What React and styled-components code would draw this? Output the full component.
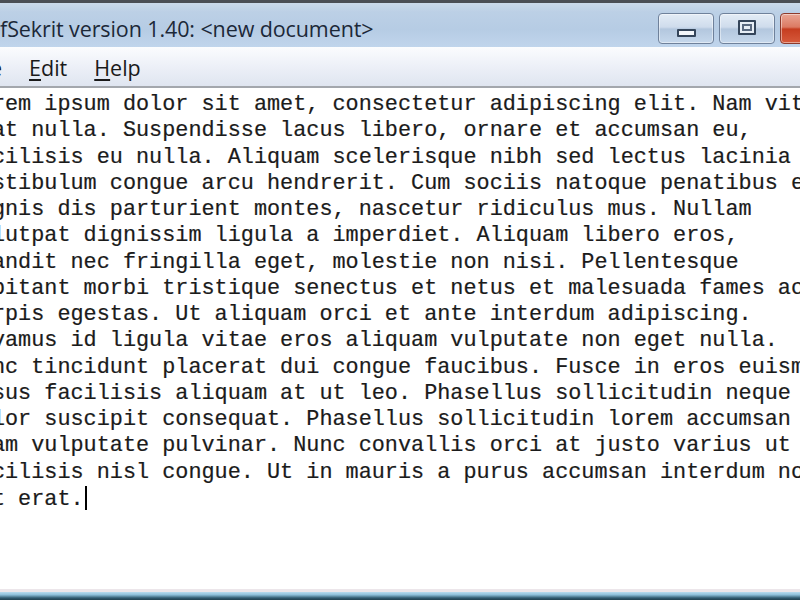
import React from "react";
import styled, { createGlobalStyle } from "styled-components";

const GlobalStyle = createGlobalStyle`
  html, body {
    margin: 0;
    padding: 0;
    background: #fff;
  }
  body {
    overflow: hidden;
  }
`;

const lines = [
  "Lorem ipsum dolor sit amet, consectetur adipiscing elit. Nam vitae",
  "erat nulla. Suspendisse lacus libero, ornare et accumsan eu,",
  "facilisis eu nulla. Aliquam scelerisque nibh sed lectus lacinia",
  "Vestibulum congue arcu hendrerit. Cum sociis natoque penatibus et",
  "magnis dis parturient montes, nascetur ridiculus mus. Nullam",
  "volutpat dignissim ligula a imperdiet. Aliquam libero eros,",
  "blandit nec fringilla eget, molestie non nisi. Pellentesque",
  "habitant morbi tristique senectus et netus et malesuada fames ac",
  "turpis egestas. Ut aliquam orci et ante interdum adipiscing.",
  "Vivamus id ligula vitae eros aliquam vulputate non eget nulla.",
  "Nunc tincidunt placerat dui congue faucibus. Fusce in eros euismod",
  "risus facilisis aliquam at ut leo. Phasellus sollicitudin neque",
  "dolor suscipit consequat. Phasellus sollicitudin lorem accumsan",
  "diam vulputate pulvinar. Nunc convallis orci at justo varius ut",
  "facilisis nisl congue. Ut in mauris a purus accumsan interdum non",
  "sit erat.",
];

export default function App() {
  return (
    <>
      <GlobalStyle />
      <Window>
        <TitleBar>
          <Title>fSekrit version 1.40: &lt;new document&gt;</Title>
          <Controls>
            <CaptionButton aria-label="Minimize">
              <MinGlyph />
            </CaptionButton>
            <CaptionButton aria-label="Maximize">
              <MaxGlyph />
            </CaptionButton>
            <CaptionButton aria-label="Close" $close>
              <CloseGlyph>✕</CloseGlyph>
            </CaptionButton>
          </Controls>
        </TitleBar>

        <MenuBar>
          <MenuItem $first>
            <u>F</u>ile
          </MenuItem>
          <MenuItem>
            <u>E</u>dit
          </MenuItem>
          <MenuItem>
            <u>H</u>elp
          </MenuItem>
        </MenuBar>

        <Editor>
          <Text>
            {lines.join("\n")}
            <Caret />
          </Text>
        </Editor>

        <BottomFrame />
      </Window>
    </>
  );
}

const Window = styled.div`
  width: 800px;
  height: 600px;
  display: flex;
  flex-direction: column;
  overflow: hidden;
  background: #fff;
`;

const TitleBar = styled.div`
  flex: none;
  height: 38px;
  padding-top: 6px;
  border-top: 3px solid #4b4f55;
  display: flex;
  align-items: center;
  overflow: hidden;
  background: linear-gradient(
    to bottom,
    #cbdaea 0%,
    #bcd0e6 20%,
    #b6cce4 60%,
    #c0d5ec 100%
  );
`;

const Title = styled.div`
  flex: 1;
  min-width: 0;
  white-space: nowrap;
  font-family: "Open Sans", "Noto Sans", sans-serif;
  font-size: 21.5px;
  color: #1c2838;
  letter-spacing: -0.1px;
`;

const Controls = styled.div`
  flex: none;
  display: flex;
  gap: 5px;
  margin-right: -40px;
`;

const CaptionButton = styled.div`
  width: ${(p) => (p.$close ? "60px" : "56px")};
  height: 31px;
  box-sizing: border-box;
  border: 1px solid ${(p) => (p.$close ? "#8d3a2c" : "#6f819b")};
  border-radius: 4px;
  display: flex;
  align-items: center;
  justify-content: center;
  box-shadow: inset 0 0 0 1px rgba(255, 255, 255, 0.45);
  background: ${(p) =>
    p.$close
      ? "linear-gradient(to bottom, #e9a594 0%, #dc7a63 45%, #c63d20 52%, #d65a3c 100%)"
      : "linear-gradient(to bottom, #e3ecf6 0%, #cfdcec 45%, #b3c7de 52%, #c6d8ec 100%)"};
`;

const MinGlyph = styled.div`
  width: 15px;
  height: 4px;
  margin-top: 10px;
  border: 2px solid #34455a;
  border-radius: 1px;
  background: #f3f6fa;
`;

const MaxGlyph = styled.div`
  width: 14px;
  height: 11px;
  margin-bottom: 2px;
  border: 2px solid #34455a;
  border-radius: 1px;
  background: #e7eef6;
  box-shadow: inset 0 0 0 2px #e7eef6, inset 0 0 0 4px #5a6a80;
`;

const CloseGlyph = styled.span`
  font-family: "DejaVu Sans", sans-serif;
  font-size: 20px;
  font-weight: bold;
  color: #fff;
  text-shadow: 0 0 2px #7a2010;
`;

const MenuBar = styled.div`
  flex: none;
  height: 37px;
  padding-top: 2px;
  display: flex;
  align-items: center;
  gap: 27px;
  border-bottom: 2px solid #a3a7ad;
  background: linear-gradient(to bottom, #fbfcfe 0%, #eef1f8 45%, #dfe5f0 100%);
`;

const MenuItem = styled.div`
  margin-left: ${(p) => (p.$first ? "-32px" : "0")};
  font-family: "Open Sans", "Noto Sans", sans-serif;
  font-size: 21.5px;
  color: #1a1a1a;
  white-space: nowrap;

  u {
    text-underline-offset: 3px;
    text-decoration-thickness: 1.5px;
  }
`;

const Editor = styled.div`
  flex: 1;
  min-height: 0;
  overflow: hidden;
  padding-top: 4px;
  background: #fff;
`;

const Text = styled.div`
  margin-left: -34.3px;
  white-space: pre;
  font-family: "Courier New", "Liberation Mono", monospace;
  font-size: 21.83px;
  line-height: 26.27px;
  color: #1b1b1b;
  -webkit-text-stroke: 0.2px #1b1b1b;
`;

const Caret = styled.span`
  display: inline-block;
  width: 2px;
  height: 24px;
  margin-left: 1px;
  vertical-align: -5px;
  background: #000;
`;

const BottomFrame = styled.div`
  flex: none;
  height: 8px;
  border-top: 3px solid #ece6ea;
  background: linear-gradient(to bottom, #b8dbee 0%, #8dbfd9 35%, #2f5a70 75%, #22404f 100%);
`;
